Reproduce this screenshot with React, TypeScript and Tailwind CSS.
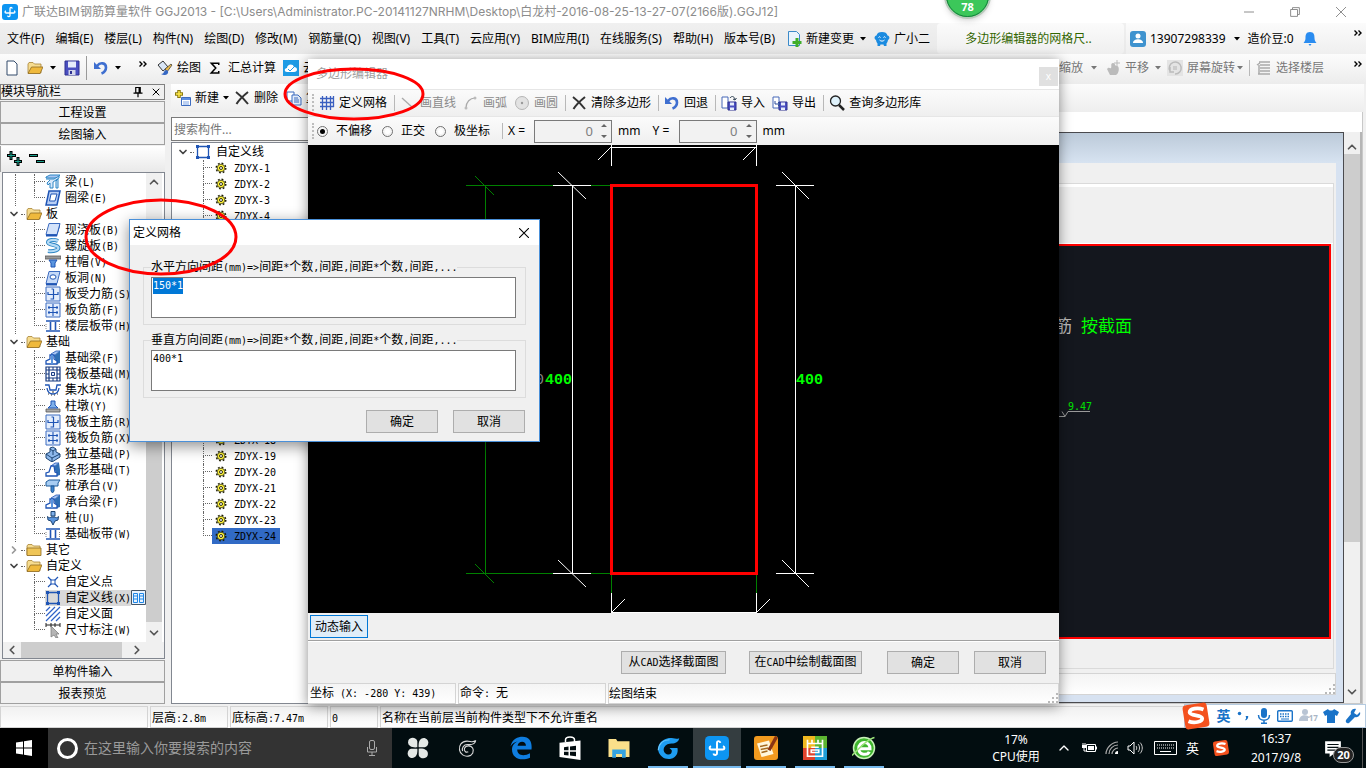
import { useEffect, useRef } from "react";
import type { ReactNode } from "react";
import clsx from "clsx";
import { ChevronDown, ChevronLeft, ChevronRight, ChevronUp, X } from "lucide-react";

// ---------- data ----------

const MENUS = [
    "文件(F)", "编辑(E)", "楼层(L)", "构件(N)", "绘图(D)", "修改(M)", "钢筋量(Q)", "视图(V)",
    "工具(T)", "云应用(Y)", "BIM应用(I)", "在线服务(S)", "帮助(H)", "版本号(B)",
];

interface TreeItem {
    label: string;
    icon: string;
    folder?: "open" | "closed";
    last?: boolean;
    trunk?: boolean;
    selected?: boolean;
}

const NAV_TREE: TreeItem[] = [
    { label: "梁(L)", icon: "beam", trunk: true },
    { label: "圈梁(E)", icon: "ring", trunk: true, last: true },
    { label: "板", icon: "", folder: "open" },
    { label: "现浇板(B)", icon: "slab", trunk: true },
    { label: "螺旋板(B)", icon: "spiral", trunk: true },
    { label: "柱帽(V)", icon: "cap", trunk: true },
    { label: "板洞(N)", icon: "hole", trunk: true },
    { label: "板受力筋(S)", icon: "rebar", trunk: true },
    { label: "板负筋(F)", icon: "rebar2", trunk: true },
    { label: "楼层板带(H)", icon: "band", trunk: true, last: true },
    { label: "基础", icon: "", folder: "open" },
    { label: "基础梁(F)", icon: "footing", trunk: true },
    { label: "筏板基础(M)", icon: "raft", trunk: true },
    { label: "集水坑(K)", icon: "pit", trunk: true },
    { label: "柱墩(Y)", icon: "pier", trunk: true },
    { label: "筏板主筋(R)", icon: "rebar", trunk: true },
    { label: "筏板负筋(X)", icon: "rebar2", trunk: true },
    { label: "独立基础(P)", icon: "isolated", trunk: true },
    { label: "条形基础(T)", icon: "strip", trunk: true },
    { label: "桩承台(V)", icon: "pilecap", trunk: true },
    { label: "承台梁(F)", icon: "footing", trunk: true },
    { label: "桩(U)", icon: "pile", trunk: true },
    { label: "基础板带(W)", icon: "band", trunk: true, last: true },
    { label: "其它", icon: "", folder: "closed" },
    { label: "自定义", icon: "", folder: "open" },
    { label: "自定义点", icon: "point" },
    { label: "自定义线(X)", icon: "poly", selected: true },
    { label: "自定义面", icon: "hatch" },
    { label: "尺寸标注(W)", icon: "dim", last: true },
];

const COMPONENTS = Array.from({ length: 24 }, (_, i) => `ZDYX-${i + 1}`);

// ---------- shared bits ----------

// Latin runs are set in a half-width mono face, Chinese stays full width
function Sim({ children }: { children: string }) {
    return (
        <>
            {children.split(/([\x20-\x7e]+)/).map((part, i) =>
                i % 2 ? (
                    <span key={i} className="font-['DejaVu_Sans_Mono',monospace] text-[10px] whitespace-pre">{part}</span>
                ) : (
                    part
                )
            )}
        </>
    );
}

function Svg({ children, size = "size-4" }: { children: ReactNode; size?: string }) {
    return (
        <svg viewBox="0 0 16 16" className={clsx("shrink-0", size)} fill="none">
            {children}
        </svg>
    );
}

function Arrow({ className = "fill-black" }: { className?: string }) {
    return (
        <svg viewBox="0 0 6 4" className={clsx("h-1 w-1.5 shrink-0", className)}>
            <path d="M0 0h6L3 3.5z" />
        </svg>
    );
}

function More() {
    return (
        <svg viewBox="0 0 8 6" className="h-1.5 w-2 shrink-0" stroke="#000" strokeWidth="1.4" fill="none">
            <path d="M.5.5 3 3 .5 5.5M4.5.5 7 3 4.5 5.5" />
        </svg>
    );
}

function Sep() {
    return <span className="-mr-0.5 h-4 w-px shrink-0 bg-[#b8b8b8]" />;
}

function Grip() {
    return (
        <svg viewBox="0 0 10 10" className="size-2.5 shrink-0" fill="#b9b9b9">
            <path d="M8 0h2v2H8zM4 4h2v2H4zM8 4h2v2H8zM0 8h2v2H0zM4 8h2v2H4zM8 8h2v2H8z" />
        </svg>
    );
}

function DragDots() {
    return <span className="h-4 w-0 shrink-0 border-l-2 border-dotted border-[#bdbdbd]" />;
}

function UndoIcon() {
    return (
        <Svg>
            <path d="M4 6C7 2 13 2.5 13 7.5c0 3-2 5-4.5 6" stroke="#3f6fd0" strokeWidth="2.6" />
            <path d="M1 2v7h7z" fill="#3f6fd0" />
        </Svg>
    );
}

function CrossIcon() {
    return (
        <Svg>
            <path d="M2 2c4 3 8 7 12 12M14 2C9 6 5 10 2.5 14" stroke="#333" strokeWidth="2" />
        </Svg>
    );
}

function FloppyIcon() {
    return (
        <Svg>
            <path d="M1 1h14v14H1z" fill="#4a4fc0" stroke="#2e3190" />
            <path d="M4 1.5h8v6H4z" fill="#e6ecfb" />
            <path d="M4.5 10h7v5h-7z" fill="#d3d6ea" />
            <path d="M6 11h2v3H6z" fill="#2e3190" />
        </Svg>
    );
}

function FolderIcon({ open }: { open?: boolean }) {
    return (
        <Svg>
            <path d="M1 13V4l1-1.5h4L7.5 4H14v9z" fill="#f6dc90" stroke="#a88436" strokeWidth=".8" />
            {open ? (
                <path d="M1 13.5 4.5 7H16l-3 6.5z" fill="#efb93c" stroke="#8f6b21" strokeWidth=".8" />
            ) : (
                <path d="M1 6h14v7.5H1z" fill="#efc557" stroke="#8f6b21" strokeWidth=".8" />
            )}
        </Svg>
    );
}

function TransferIcon({ out }: { out?: boolean }) {
    return (
        <Svg>
            <path d="M1 2h6v11H1z" fill="#fff" stroke="#4668b8" />
            <path d="M7 7h8v8H7z" fill="#4a4fc0" stroke="#2e3190" />
            <path d="M9 7.5h4v3H9zM9 12.5h4V15H9z" fill="#e6ecfb" />
            {out ? <path d="M3 6v3h5M6 7l2 2-2 2" stroke="#2d4d9a" /> : <path d="M9 3c2-3 5-1 5 2M12 4l2 1 1.5-2" stroke="#345" />}
        </Svg>
    );
}

function HookMark() {
    return (
        <>
            <rect width="16" height="16" rx="3" fill="#0d95f2" />
            <path d="M10.2 4.6C10 3 8 3 8 4.6v6.8c0 1.6-2 1.6-2.4.2M4 6.8c-1.400.6-1.200 2.200.2 2.200h7.600c1.400 0 1.600-1.600.2-2.200" stroke="#fff" strokeWidth="1.3" />
        </>
    );
}

function SogouIcon({ size }: { size: string }) {
    return (
        <Svg size={size}>
            <rect x="1.5" y="1.5" width="13" height="13" rx="2" fill="#f4511e" transform="rotate(-9 8 8)" />
            <path d="M12 4.5C9 3.3 4.5 4 4.6 6.1c.1 2 6.6 1.2 6.7 3.2.1 1.9-4.3 2.7-7.3 1.5" stroke="#fff" strokeWidth="2" />
        </Svg>
    );
}

// ---------- tree icons ----------

const BLUE = "#1f55b5";
const PALE = "#a9c6f2";

const TREE_ICONS: Record<string, ReactNode> = {
    beam: (
        <>
            <path d="M1 3 5 1h10l-3 3H1z" fill={PALE} stroke="#2d86c5" />
            <path d="M1 5h8l5-3v2L8 8v6H5V9L3 11 2 9l3-3" fill="#d8e9fb" stroke="#2d86c5" />
            <path d="M11 7v7h2V5z" fill="#d8e9fb" stroke="#2d86c5" />
        </>
    ),
    ring: (
        <>
            <path d="M4 1h11l-3 14H1z" fill="#b9cff5" stroke={BLUE} strokeWidth="1.5" />
            <path d="M6 4h6l-2 7H4.5z" fill="#fff" stroke={BLUE} />
        </>
    ),
    slab: (
        <>
            <path d="M4 1.5h11l-3 11H1z" fill="#d4e3fa" stroke="#3d6cc0" />
            <path d="M1 12.5h11l3-11V4l-3 10.5H1z" fill={BLUE} />
        </>
    ),
    spiral: (
        <>
            <path d="M13 3C9 1 3 2 3 4.500s8 2 10 4.500-4 5-10 4" stroke="#2d86c5" strokeWidth="4" />
            <path d="M13 3C9 1 3 2 3 4.500s8 2 10 4.500-4 5-10 4" stroke="#b5dbf6" strokeWidth="2.2" />
        </>
    ),
    cap: (
        <>
            <path d="M0 2h16v3H0z" fill="#999" stroke="#555" strokeWidth=".8" />
            <path d="M4 6h8l-2 3v4H6V9z" fill="#5a95de" stroke={BLUE} />
        </>
    ),
    hole: (
        <>
            <path d="M4 1.5h11l-3 12H1z" fill="#c6daf8" stroke="#3d6cc0" />
            <ellipse cx="8" cy="7" rx="3" ry="2.2" fill="#fff" stroke={BLUE} />
            <path d="M1 14.5h11" stroke={BLUE} strokeWidth="2" />
        </>
    ),
    rebar: (
        <>
            <path d="M1 1h14v14H1z" fill="#e3edfc" stroke="#3d6cc0" />
            <path d="M3 6v2.5h10V6M8.5 3v10H5.5M8.5 3h-2" stroke={BLUE} strokeWidth="1.2" />
        </>
    ),
    rebar2: (
        <>
            <path d="M1 1h14v14H1z" fill="#e3edfc" stroke="#3d6cc0" />
            <path d="M8 2v12M3 5.5h10M3 10.5h10M4 4v3M12 4v3M4 9v3M12 9v3" stroke={BLUE} strokeWidth="1.1" />
        </>
    ),
    band: (
        <>
            <path d="M1 3h14M1 13h14" stroke={BLUE} strokeWidth="1.6" />
            <path d="M5.5 4v8M10.5 4v8" stroke={BLUE} strokeWidth="1.6" />
            <path d="M1 6v5M14.5 6v5" stroke="#888" strokeDasharray="1 1" />
        </>
    ),
    footing: (
        <>
            <path d="M6 4 11 1h4L9 6z" fill={PALE} stroke={BLUE} strokeWidth=".8" />
            <path d="m9 6 6-5v12l-3 1z" fill="#2f6fb4" />
            <path d="M1 14v-3l4-2V5h4v4l3 2v3z" fill="#fff" stroke={BLUE} strokeWidth="1.3" />
            <path d="M6 5h2v9H6z" fill="#5a95de" />
        </>
    ),
    raft: (
        <>
            <path d="M1 1h14v14H1z" fill="#fff" stroke="#173a80" strokeWidth="1.2" />
            <path d="M4 1v14M12 1v14M1 4h14M1 12h14" stroke="#173a80" strokeWidth="1.2" />
            <path d="M6.5 6.5h3v3h-3z" fill="#dfeafc" stroke="#173a80" />
            <path d="M8 1v3M8 12v3M1 8h3M12 8h3" stroke="#173a80" />
        </>
    ),
    pit: (
        <>
            <path d="M0 3h4l1 5h6l1-5h4M2 6c1 8 11 8 12 0" stroke={BLUE} strokeWidth="1.3" />
            <path d="M3 12h1M6 13h1M9 13h1M12 12h1M7 10h2" stroke="#333" />
        </>
    ),
    pier: (
        <>
            <path d="M1 11h14v3H1z" fill="#aaa" stroke="#555" strokeWidth=".8" />
            <path d="m3 10 3-3V3h4v4l3 3z" fill="#7fb0ea" stroke={BLUE} />
        </>
    ),
    isolated: (
        <>
            <path d="m1 8 4-2V2l3-1 3 2v3l4 2v3l-8 5-6-4z" fill="#8db8ec" stroke="#1d4472" />
            <path d="m1 8 6 4 8-4M7 12v4M5 3l3 2 3-2M8 5v4" stroke="#1d4472" />
        </>
    ),
    strip: (
        <>
            <path d="M6 4 10 1h4L9 5z" fill={PALE} stroke={BLUE} strokeWidth=".8" />
            <path d="m9 5 5-4 1 7v5l-3 1z" fill="#2f6fb4" />
            <path d="M1 14v-3l3-1 2-6h3l1 6 2 1v3z" fill="#fff" stroke={BLUE} strokeWidth="1.3" />
        </>
    ),
    pilecap: (
        <>
            <path d="m1 4 3-2h11l-2 3v3H1z" fill="#a7cdf3" stroke="#1d5a9a" />
            <path d="M6 8h3v5l-1.5 2L6 13z" fill="#3d84cf" stroke="#1d5a9a" />
        </>
    ),
    pile: (
        <>
            <path d="M6 1.5h4V6H6z" fill="#7fb0ea" stroke="#1d4472" />
            <path d="M2.5 6.500C4 8 5 8 6 7h4c1 1 2 1 3.500-.5l-.5 3.500-3 1-2 4-2-4-3-1z" fill="#5a95de" stroke="#1d4472" />
        </>
    ),
    point: (
        <>
            <path d="m3 3 10 10M13 3 3 13" stroke={BLUE} strokeWidth="1.2" />
            <path d="M6 6h4v4H6z" fill="#fff" stroke={BLUE} />
        </>
    ),
    poly: (
        <>
            <path d="M2.5 2.5h11v11h-11z" stroke={BLUE} strokeWidth="1.3" />
            <path d="M1 1h3v3H1zM12 1h3v3h-3zM1 12h3v3H1zM12 12h3v3h-3z" fill={BLUE} />
        </>
    ),
    hatch: <path d="m1 5 4-4M1 10l9-9M1 15 15 1M6 15l9-9M11 15l4-4" stroke="#2f62c8" strokeWidth="1.2" />,
    dim: (
        <>
            <path d="M1 3h14M1 1v4M15 1v4M6 1v4M10 1v4" stroke="#222" />
            <path d="m6 4 8 8h-3l2 4h-2l-2-3-3 2z" fill="#b5b5b5" stroke="#777" strokeWidth=".7" />
        </>
    ),
    gear: (
        <>
            <circle cx="8" cy="8" r="4.8" stroke="#1c1c00" strokeWidth="1.4" strokeDasharray="1.8 1.97" />
            <circle cx="8" cy="8" r="3.8" fill="#fff338" stroke="#1c1c00" strokeWidth=".7" />
            <circle cx="8" cy="8" r="1.5" fill="#fff" stroke="#1c1c00" strokeWidth=".9" />
        </>
    ),
};

// ---------- left dock ----------

function TreeRow({ item }: { item: TreeItem }) {
    if (item.folder) {
        const Chevron = item.folder === "open" ? ChevronDown : ChevronRight;
        return (
            <li className="flex h-4 items-center">
                <Chevron className={clsx("ml-[5px] size-3 shrink-0", item.folder === "open" ? "text-[#444]" : "text-[#999]")} strokeWidth={3.5} />
                <span className="mx-px w-1 border-t border-dotted border-[#666]" />
                <FolderIcon open={item.folder === "open"} />
                <span className="ml-1 leading-4"><Sim>{item.label}</Sim></span>
            </li>
        );
    }
    return (
        <li className="flex h-4 items-center">
            <span className={clsx("ml-3 h-4 w-[19px] shrink-0", item.trunk && "border-l border-dotted border-[#666]")} />
            <span className="flex h-4 w-[11px] shrink-0 flex-col">
                <span className="h-2 border-b border-l border-dotted border-[#666]" />
                <span className={clsx("h-2", !item.last && "border-l border-dotted border-[#666]")} />
            </span>
            <span className={clsx("flex h-4 items-center gap-1 whitespace-nowrap leading-4", item.selected && "bg-[#d9d9d9]")}>
                <Svg>{TREE_ICONS[item.icon]}</Svg>
                <span><Sim>{item.label}</Sim></span>
            </span>
            {item.selected && (
                <Svg>
                    <path d="M.5.5h14v14H.5z" fill="#e8f3ff" stroke="#456" />
                    <path d="M2.5 3.5h4v9h-4zM8.5 3.5h4v9h-4zM3 6h3M3 9h3M9 6h3M9 9h3" stroke="#1e86e6" />
                </Svg>
            )}
        </li>
    );
}

function DockButton({ label }: { label: string }) {
    return (
        <button className="h-[22px] w-full shrink-0 border border-[#a0a0a0] bg-[#f0f0f0] text-center leading-[22px]">
            {label}
        </button>
    );
}

function NavDock() {
    return (
        <aside className="flex w-[165px] shrink-0 flex-col">
            <header className="flex h-4 items-center justify-between border border-[#808080] pr-0.5 leading-4">
                <span>模块导航栏</span>
                <span className="flex items-center gap-1.5">
                    <Svg size="size-3">
                        <path d="M5 2h6v7H5zM9.5 2v7M2 9.5h12M8 10v5" stroke="#000" strokeWidth="1.6" />
                    </Svg>
                    <X className="size-3" />
                </span>
            </header>
            <div className="mt-px flex flex-col">
                <DockButton label="工程设置" />
                <DockButton label="绘图输入" />
            </div>
            <div className="mt-px flex h-[26px] shrink-0 items-center gap-1.5 border-l border-[#a0a0a0] bg-linear-to-b from-white to-[#e9e9e9] pl-1.5">
                <Svg>
                    <path d="M4 0v9M0 4.5h9M11 6v9M7 10.5h8" stroke="#000" strokeWidth="3" />
                    <path d="M4 1v7M1 4.5h7M11 7v7M8 10.5h6" stroke="#1aa08c" />
                </Svg>
                <Svg>
                    <path d="M0 4.5h9M7 10.5h9" stroke="#000" strokeWidth="3" />
                    <path d="M1 4.5h7M8 10.5h7" stroke="#1aa08c" />
                </Svg>
            </div>
            <div className="ml-0.5 flex min-h-0 flex-1 flex-col border border-[#828790] bg-white">
                <div className="flex min-h-0 flex-1">
                    <ul className="min-w-0 flex-1 overflow-hidden pt-px">
                        {NAV_TREE.map((item) => <TreeRow key={item.label} item={item} />)}
                    </ul>
                    <div className="mr-0.5 flex w-4 shrink-0 flex-col items-center justify-between bg-[#f0f0f0] py-0.5">
                        <ChevronUp className="size-3.5 text-[#555]" strokeWidth={3} />
                        <span className="mt-12 mb-1 w-full flex-1 bg-[#cdcdcd]" />
                        <ChevronDown className="size-3.5 text-[#555]" strokeWidth={3} />
                    </div>
                </div>
                <div className="flex h-4 shrink-0 items-center bg-[#f0f0f0] pr-5">
                    <ChevronLeft className="mx-0.5 size-3.5 text-[#555]" strokeWidth={3} />
                    <span className="mr-2 h-full flex-1 bg-[#cdcdcd]" />
                    <ChevronRight className="size-3.5 text-[#555]" strokeWidth={3} />
                </div>
            </div>
            <div className="mt-px flex flex-col">
                <DockButton label="单构件输入" />
                <DockButton label="报表预览" />
            </div>
        </aside>
    );
}

function ComponentPanel() {
    return (
        <section className="ml-1.5 flex w-[184px] shrink-0 flex-col overflow-hidden">
            <div className="flex h-7 shrink-0 items-center gap-1 bg-linear-to-b from-white to-[#eeeeee] pl-1">
                <button className="flex items-center gap-1">
                    <Svg>
                        <path d="M4 0v8M0 4h8" stroke="#8a7a10" strokeWidth="3.5" />
                        <path d="M4 1v6M1 4h6" stroke="#ffe94a" strokeWidth="1.5" />
                        <path d="M6.5 7.5h9v8h-9z" fill="#fff" stroke="#3d6cc0" />
                        <path d="M7 8h8v2H7z" fill="#5c8de0" />
                        <path d="M8 12h6M8 14h6" stroke="#7da4e6" />
                    </Svg>
                    新建
                    <Arrow />
                </button>
                <button className="ml-px flex items-center gap-1"><CrossIcon />删除</button>
                <button className="ml-1 flex items-center gap-1 whitespace-nowrap">
                    <Svg>
                        <path d="M1 2h7v9H1z" fill="#fff" stroke="#3d6cc0" />
                        <path d="M6 5h6l3 3v7H6z" fill="#e3edfc" stroke="#3d6cc0" />
                        <path d="M8 8h4M8 10h5M8 12h5" stroke="#3d6cc0" />
                    </Svg>
                    复制
                </button>
            </div>
            <input
                aria-label="搜索构件"
                placeholder="搜索构件..."
                className="mt-[5px] h-6 w-full shrink-0 border border-[#7a7a7a] bg-white pl-0.5 outline-none placeholder:text-[#777]"
            />
            <div className="mt-px min-h-0 flex-1 overflow-hidden border border-[#828790] bg-white">
                <div className="flex h-[17px] items-center pt-px pl-[5px]">
                    <ChevronDown className="size-3 text-[#444]" strokeWidth={3.5} />
                    <span className="mx-px w-1 border-t border-dotted border-[#666]" />
                    <Svg>{TREE_ICONS.poly}</Svg>
                    <span className="ml-[5px]">自定义线</span>
                </div>
                <ul>
                    {COMPONENTS.map((name, i) => (
                        <li key={name} className="flex h-4 items-center">
                            <span className="ml-[31px] flex h-4 w-[9px] shrink-0 flex-col">
                                <span className="h-2 border-b border-l border-dotted border-[#666]" />
                                <span className={clsx("h-2", i < 23 && "border-l border-dotted border-[#666]")} />
                            </span>
                            <span className={clsx("flex h-4 items-center gap-[5px] pr-1 pl-px leading-4", i === 23 && "bg-[#316ac5]")}>
                                <Svg>{TREE_ICONS.gear}</Svg>
                                <span><Sim>{name}</Sim></span>
                            </span>
                        </li>
                    ))}
                </ul>
            </div>
        </section>
    );
}

// ---------- drawing area behind the editor ----------

function DrawingArea() {
    return (
        <main className="ml-1 flex min-w-0 flex-1 flex-col">
            <div className="mr-0.5 h-7 shrink-0 bg-linear-to-b from-[#fcfcfc] to-[#eeeeee]" />
            <div className="mr-[3px] h-5 shrink-0 border-r border-[#c8c8c8] bg-white" />
            <div className="mr-[3px] flex min-h-0 flex-1 border border-t-0 border-[#c8c8c8] bg-white">
                <div className="flex min-w-0 flex-1 flex-col border-t border-r border-b border-[#4a4a4e] bg-[#d7e2f1] pr-[7px] pb-[7px]">
                    <div className="-mr-[7px] h-[30px] shrink-0 bg-linear-to-b from-[#bccad9] to-[#d7e3f1]" />
                    <div className="flex min-h-0 flex-1 flex-col bg-[#f0f0f0] pt-5">
                        <div className="mr-0.5 flex min-h-0 flex-1 flex-col border-t border-r border-b border-[#dadada] bg-[#f0f0f0]">
                            <div className="h-[60px] shrink-0 border-t-3 border-b border-white" />
                            <div className="relative mr-0.5 min-h-0 flex-1 overflow-hidden border-2 border-[#ff0000] bg-[#14171e]">
                                <svg viewBox="0 0 270 180" className="absolute top-0 right-0 h-[180px] w-[270px]">
                                    <text x="-4" y="86" fontSize="17" fill="#b9b9b9" fontFamily="Noto Sans CJK SC">筋</text>
                                    <text x="22" y="86" fontSize="17" fill="#00ff00" fontFamily="Noto Sans CJK SC">按截面</text>
                                    <text x="9" y="164" fontSize="10" fill="#00e000" fontFamily="DejaVu Sans Mono">9.47</text>
                                    <path d="M0 170.5h6l3-5h22M3 165.5l3 5" stroke="#9a9a9a" fill="none" />
                                </svg>
                            </div>
                            <div className="h-[29px] shrink-0" />
                        </div>
                        <div className="mt-1 flex h-[22px] shrink-0 items-end justify-end border border-[#d4d4d4] bg-linear-to-b from-[#f4f4f4] to-white"><Grip /></div>
                    </div>
                </div>
                <div className="flex w-[18px] shrink-0 flex-col items-center border-r-2 border-[#b5b5b5] bg-[#f0f0f0] pt-2 pb-1">
                    <ChevronUp className="size-3.5 text-[#555]" strokeWidth={3} />
                    <span className="h-[388px] w-full bg-[#cdcdcd]" />
                    <span className="flex-1" />
                    <ChevronDown className="size-3.5 text-[#555]" strokeWidth={3} />
                </div>
            </div>
        </main>
    );
}

// ---------- top bars ----------

function TitleBar() {
    return (
        <header className="flex h-[23px] shrink-0 items-center bg-white pl-0.5 text-[#8c8c8c]">
            <Svg><HookMark /></Svg>
            <h1 className="ml-1 flex-1 truncate font-['Inter','Noto_Sans_CJK_SC',sans-serif]">
                广联达BIM钢筋算量软件 GGJ2013 - [C:\Users\Administrator.PC-20141127NRHM\Desktop\白龙村-2016-08-25-13-27-07(2166版).GGJ12]
            </h1>
            <div className="flex items-center gap-9 pr-5">
                <button aria-label="最小化"><Svg size="size-2.5"><path d="M0 8h16" stroke="#888" strokeWidth="1.5" /></Svg></button>
                <button aria-label="还原"><Svg size="size-2.5"><path d="M1 4h11v11H1zM4 4V1h11v11h-3" stroke="#888" strokeWidth="1.5" /></Svg></button>
                <button aria-label="关闭"><Svg size="size-2.5"><path d="m0 0 16 16M16 0 0 16" stroke="#888" strokeWidth="1.5" /></Svg></button>
            </div>
        </header>
    );
}

function MenuBar() {
    return (
        <div className="flex h-[31px] shrink-0 items-center whitespace-nowrap bg-linear-to-b from-[#f0f0f0] to-[#e8e8e8]">
            <nav className="flex gap-[11px] pl-[7px]">
                {MENUS.map((m) => <button key={m}>{m}</button>)}
            </nav>
            <button className="ml-[11px] flex items-center gap-1">
                <Svg>
                    <path d="M2.5.5h8l3 3v11h-11z" fill="#e9f4fd" stroke="#3b8ac9" />
                    <path d="M11 7v9M6.5 11.5h9" stroke="#3fae2a" strokeWidth="3" />
                </Svg>
                新建变更
                <Arrow className="ml-0.5 fill-black" />
            </button>
            <button className="ml-2 flex items-center gap-1">
                <Svg>
                    <path d="M8 1c3 0 5 1 5.5 3.5C16 5 16 8 14 9c-.3 1.5-.7 2.5-1.5 3.5V15H10l-.5-1.5h-3L6 15H3.5v-2.5C2.7 11.5 2.3 10.5 2 9 0 8 0 5 2.5 4.5 3 2 5 1 8 1z" fill="#1b8be0" />
                    <path d="M4.5 6.5c.5-1 1.5-1 2 0M9.5 6.5c.5-1 1.5-1 2 0M5.5 9c1.5 1.5 3.5 1.5 5 0" stroke="#fff" />
                </Svg>
                广小二
            </button>
            <div className="ml-auto flex h-full w-[187px] items-center justify-center rounded-sm bg-linear-to-b from-[#fbfbfb] to-[#efefef] pr-1 text-[#336600]">
                多边形编辑器的网格尺..
            </div>
            <div className="ml-0.5 flex h-full w-[240px] items-center bg-linear-to-b from-[#fbfbfb] to-[#efefef] pl-1">
                <Svg>
                    <rect width="16" height="16" rx="3" fill="#3f93cf" />
                    <circle cx="8" cy="5" r="2.5" fill="#fff" />
                    <path d="M3 12c0-5 10-5 10 0z" fill="#fff" />
                </Svg>
                <span className="ml-1">13907298339</span>
                <Arrow className="ml-2 fill-black" />
                <span className="ml-2">造价豆:0</span>
                <Svg size="ml-2 size-4">
                    <path d="M8 1c4 0 4.5 3 4.5 6 0 2 .5 3 2 5H1.5c1.5-2 2-3 2-5 0-3 .5-6 4.5-6zM6.5 13h3L8 15z" fill="#2a8cf0" />
                </Svg>
                <span className="mr-1 mb-3 ml-auto"><More /></span>
            </div>
        </div>
    );
}

function ToolBar() {
    return (
        <div className="flex h-[30px] shrink-0 items-center whitespace-nowrap bg-linear-to-b from-[#fcfcfc] to-[#ececec] pb-[3px] pl-1">
            <div className="flex items-center">
                <Svg><path d="M3 1h7l3 3v11H3z" fill="#fff" stroke="#334a6a" /></Svg>
                <span className="ml-[7px]"><FolderIcon open /></span>
                <Arrow className="ml-[7px] fill-black" />
                <span className="ml-2"><FloppyIcon /></span>
                <span className="mx-1.5 h-6 w-px bg-[#9a9a9a]" />
                <UndoIcon />
                <Arrow className="ml-1.5 fill-black" />
            </div>
            <span className="mb-2 ml-[18px]"><More /></span>
            <button className="ml-2.5 flex items-center gap-1">
                <Svg>
                    <path d="m1 5 5-4 5 6-5 4z" fill="#d9e6f7" stroke="#333" />
                    <path d="m8 9 6-5 1 1-5 7z" fill="#e8b94a" stroke="#333" strokeWidth=".7" />
                    <path d="M10 10c-4 0-2 4-6 4 3 2 8 1 7-3z" fill="#3668c4" />
                </Svg>
                绘图
            </button>
            <button className="ml-2 flex items-center gap-[7px]">
                <Svg size="size-3"><path d="M13 4V1.5H3L9 8l-6 6.5h10V12" stroke="#000" strokeWidth="2" /></Svg>
                汇总计算
            </button>
            <button className="ml-[7px] flex items-center gap-1">
                <Svg>
                    <rect width="16" height="16" fill="#1d9be5" />
                    <path d="M4 12c-3 0-3-4 0-4 0-4 6-5 7-1 4 0 4 5 0 5z" fill="#fff" />
                    <path d="m5 9 2 2 4-4" stroke="#1d9be5" />
                </Svg>
                云检查
            </button>
            <div className="ml-auto flex items-center text-[#777]">
                <span>缩放</span>
                <Arrow className="ml-2 fill-[#777]" />
                <Svg size="ml-2 size-4">
                    <path d="M2 9c2-3 3 0 4-1s-1-5 2-5 1 3 4 3 2 8-1 9H5z" fill="#bbb" />
                    <path d="M12 0v6M9 3h6" stroke="#bbb" />
                </Svg>
                <span className="ml-1">平移</span>
                <Arrow className="ml-1.5 fill-[#777]" />
                <Svg size="ml-1.5 size-4">
                    <path d="M0 0h16v16H0z" fill="#e4e4e4" />
                    <path d="M3 11a6 6 0 1 1 5 3M3 7v5h4" stroke="#bbb" strokeWidth="1.5" />
                    <path d="M6 6h4v4H6z" fill="#ccc" />
                </Svg>
                <span className="ml-1">屏幕旋转</span>
                <Arrow className="ml-0.5 fill-[#777]" />
                <span className="mx-1.5 h-4 w-px bg-[#b8b8b8]" />
                <Svg><path d="M3 2h11M1 5l3-2M4 5h10M4 8h10M4 11h10M2 14h12M3 5v9" stroke="#aaa" strokeWidth="1.5" /></Svg>
                <span className="ml-1">选择楼层</span>
                <span className="mr-1 mb-2 ml-[30px]"><More /></span>
            </div>
        </div>
    );
}

// ---------- polygon editor ----------

function ToolButton({ icon, label, disabled }: { icon: ReactNode; label: string; disabled?: boolean }) {
    return (
        <button disabled={disabled} className="flex shrink-0 items-center gap-1 text-black disabled:text-[#8a8a8a]">
            {icon}
            {label}
        </button>
    );
}

function Coord({ axis }: { axis: string }) {
    return (
        <label className="flex items-center">
            <span className="w-[26px]">{axis} =</span>
            <span className="flex h-[23px] w-[78px] items-center border border-[#7a7a7a] bg-[#f2f2f2] pr-1">
                <input defaultValue="0" className="w-full min-w-0 pr-2 text-right text-[13px] text-[#808080] outline-none" />
                <svg viewBox="0 0 6 16" className="h-4 w-1.5 shrink-0" fill="#666">
                    <path d="M0 4h6L3 1zM0 12h6l-3 3z" />
                </svg>
            </span>
            <span className="ml-1.5">mm</span>
        </label>
    );
}

function PolygonCanvas() {
    return (
        <div className="min-h-0 flex-1 overflow-hidden bg-black">
            <svg viewBox="0 0 751 468" className="h-[468px] w-[751px]" fill="none">
                <g stroke="#008000">
                    <path d="M158 40.5h145M158 428.5h145M177.5 40v388M167 31l19 19M167 419l19 19M303.5 430v20M448.5 430v20" />
                </g>
                <g stroke="#fff">
                    <path d="M303 2.5h146M303.5 0v21M448.5 0v21M290 15 303 2M435 15 448 2" />
                    <path d="M245 40.5h38M245 428.5h38M264.5 40v388M250 27l28 27M250 415l28 27" />
                    <path d="M468 40.5h38M468 428.5h38M487.5 40v388M474 27l27 27M474 415l27 27" />
                    <path d="M303 467.5h146M303.5 448v20M448.5 448v20M304 467l13-13M449 467l13-13" />
                </g>
                <rect x="303.5" y="40.5" width="145" height="388" stroke="#ff0000" strokeWidth="3" />
                <g fontFamily="Liberation Mono" fontSize="15" fontWeight="700" fill="#00ff00">
                    <text x="237" y="239">400</text>
                    <text x="488" y="239">400</text>
                </g>
                <text x="209" y="239" fontFamily="Liberation Mono" fontSize="15" fill="#a0a0a0">400</text>
            </svg>
        </div>
    );
}

function PushButton({ label, className }: { label: string; className: string }) {
    return (
        <button className={clsx("h-[23px] shrink-0 border border-[#adadad] bg-[#e1e1e1] text-center leading-5", className)}>
            <Sim>{label}</Sim>
        </button>
    );
}

function PolygonEditor() {
    return (
        <section className="absolute top-[59px] left-[308px] flex h-[645px] w-[751px] flex-col bg-[#f0f0f0] whitespace-nowrap shadow-[0_2px_12px_rgba(0,0,0,0.45)]">
            <header className="flex h-[30px] shrink-0 items-center justify-between bg-white pl-2 text-[#a0a0a0]">
                <h2>多边形编辑器</h2>
                <button className="mt-1 mr-px size-[19px] bg-[#e0e0e0] text-[10px] leading-4 text-white">x</button>
            </header>
            <div className="flex h-[27px] shrink-0 items-center gap-[7px] border-t border-[#e6e6e6] bg-linear-to-b from-[#fbfbfb] to-[#efefef] pl-1">
                <span className="-mr-0.5"><DragDots /></span>
                <ToolButton label="定义网格" icon={<Svg><path d="M3.5 1v14M7.5 1v14M11.5 1v14M1 3.5h14M1 7.5h14M1 11.5h14M14.5 1v11" stroke="#3a5fc0" strokeWidth="1.3" /></Svg>} />
                <Sep />
                <ToolButton disabled label="画直线" icon={<Svg><path d="m2 3 11 10" stroke="#aaa" strokeWidth="1.3" /></Svg>} />
                <ToolButton disabled label="画弧" icon={<Svg><path d="M3 13C3 7 7 3 12 3" stroke="#aaa" strokeWidth="1.2" /><circle cx="3" cy="13" r="1.5" fill="#bbb" /><circle cx="12" cy="3" r="1.5" fill="#bbb" /></Svg>} />
                <ToolButton disabled label="画圆" icon={<Svg><circle cx="8" cy="8" r="6.5" fill="#e2e2e2" stroke="#b5b5b5" /><circle cx="8" cy="8" r="1.2" fill="#999" /></Svg>} />
                <Sep />
                <ToolButton label="清除多边形" icon={<CrossIcon />} />
                <Sep />
                <ToolButton label="回退" icon={<UndoIcon />} />
                <Sep />
                <ToolButton label="导入" icon={<TransferIcon />} />
                <ToolButton label="导出" icon={<TransferIcon out />} />
                <Sep />
                <ToolButton label="查询多边形库" icon={<Svg><circle cx="6.5" cy="6" r="5" fill="#dff2fb" stroke="#222" strokeWidth="1.3" /><path d="m10 10 5 5" stroke="#222" strokeWidth="2.5" /></Svg>} />
            </div>
            <div className="flex h-[29px] shrink-0 items-center border-t border-[#e6e6e6] bg-linear-to-b from-[#fbfbfb] to-[#efefef] pl-1">
                <DragDots />
                <div className="ml-[3px] flex items-center gap-2.5">
                    {["不偏移", "正交", "极坐标"].map((name, i) => (
                        <label key={name} className="flex items-center gap-2">
                            <input
                                type="radio"
                                name="offset"
                                defaultChecked={i === 0}
                                className="size-[11px] appearance-none rounded-full border border-[#707070] bg-white bg-clip-content p-0.5 checked:bg-black"
                            />
                            {name}
                        </label>
                    ))}
                </div>
                <span className="mr-[5px] ml-3 h-4 w-px bg-[#b8b8b8]" />
                <div className="flex gap-3">
                    <Coord axis="X" />
                    <Coord axis="Y" />
                </div>
            </div>
            <PolygonCanvas />
            <div className="h-7 shrink-0 border-b border-[#a0a0a0] pt-0.5 pl-0.5">
                <button className="h-[23px] w-[58px] border border-[#0078d7] bg-[#e0eef9] text-center leading-5">动态输入</button>
            </div>
            <div className="flex h-[42px] shrink-0 items-center justify-end border-t border-white pr-[13px]">
                <PushButton label="从CAD选择截面图" className="w-[105px]" />
                <PushButton label="在CAD中绘制截面图" className="ml-[23px] w-[113px]" />
                <PushButton label="确定" className="ml-[25px] w-[72px]" />
                <PushButton label="取消" className="ml-[15px] w-[72px]" />
            </div>
            <footer className="flex h-[21px] shrink-0 gap-0.5 bg-linear-to-b from-[#f4f4f4] to-white leading-[18px]">
                <span className="w-[148px] border border-l-0 border-[#d4d4d4] pl-0.5"><Sim>坐标 (X: -280 Y: 439)</Sim></span>
                <span className="w-[148px] border border-[#d4d4d4] pl-px"><Sim>命令: 无</Sim></span>
                <span className="flex flex-1 items-end justify-between border border-[#d4d4d4]">绘图结束<Grip /></span>
            </footer>
        </section>
    );
}

// ---------- grid dialog ----------

function GridDialog() {
    const first = useRef<HTMLTextAreaElement>(null);

    useEffect(() => {
        first.current?.focus();
        first.current?.select();
    }, []);

    const area = "block h-[41px] w-full resize-none border border-[#7a7a7a] bg-white px-px font-['DejaVu_Sans_Mono',monospace] text-[10px] leading-4 outline-none selection:bg-[#0078d7] selection:text-white";

    return (
        <section role="dialog" aria-label="定义网格" className="absolute top-[219px] left-[129px] w-[411px] border border-[#4a90d9] bg-[#f0f0f0] whitespace-nowrap shadow-[0_4px_14px_rgba(0,0,0,0.45)]">
            <header className="flex h-[25px] items-center justify-between bg-white pr-2.5 pl-[3px]">
                <h2>定义网格</h2>
                <button aria-label="关闭"><Svg size="size-2.5"><path d="m0 0 16 16M16 0 0 16" stroke="#000" strokeWidth="1.7" /></Svg></button>
            </header>
            <div className="flex flex-col gap-[7px] px-[13px] pt-3.5">
                <fieldset className="min-w-0 border border-[#dcdcdc] pt-0.5 pr-[9px] pb-1.5 pl-[7px]">
                    <legend className="h-4 leading-4"><label htmlFor="grid-h"><Sim>水平方向间距(mm)=&gt;间距*个数,间距,间距*个数,间距,...</Sim></label></legend>
                    <textarea id="grid-h" ref={first} className={area} defaultValue="150*1" />
                </fieldset>
                <fieldset className="min-w-0 border border-[#dcdcdc] pt-0.5 pr-[9px] pb-1.5 pl-[7px]">
                    <legend className="h-4 leading-4"><label htmlFor="grid-v"><Sim>垂直方向间距(mm)=&gt;间距*个数,间距,间距*个数,间距,...</Sim></label></legend>
                    <textarea id="grid-v" className={area} defaultValue="400*1" />
                </fieldset>
            </div>
            <div className="flex justify-end gap-[15px] pt-3 pr-3.5 pb-2">
                <PushButton label="确定" className="w-[72px]" />
                <PushButton label="取消" className="w-[72px]" />
            </div>
        </section>
    );
}

// ---------- bottom bars ----------

function StatusBar() {
    return (
        <footer className="relative flex h-[22px] shrink-0 gap-0.5 bg-linear-to-b from-[#f0f0f0] to-white leading-[22px] whitespace-nowrap">
            <span className="w-[148px] border border-[#d4d4d4]" />
            <span className="w-[78px] border border-[#d4d4d4] pl-px"><Sim>层高:2.8m</Sim></span>
            <span className="w-[98px] border border-[#d4d4d4] pl-px"><Sim>底标高:7.47m</Sim></span>
            <span className="w-12 border border-[#d4d4d4] pl-px"><Sim>0</Sim></span>
            <span className="flex-1 border border-[#d4d4d4] pl-px">名称在当前层当前构件类型下不允许重名</span>
            <div className="absolute -top-0.5 right-0 flex h-6 w-[182px] items-center justify-between border border-[#b5cbe0] bg-white pr-1 font-bold text-[#1a73c8]">
                <SogouIcon size="-my-2 -ml-1 size-[30px]" />
                <span className="text-[14px]">英</span>
                <Svg size="size-3.5"><circle cx="4" cy="5" r="2" fill="#1a73c8" /><path d="M11 8h3c0 3-1 4-3 5l-.5-1c1-.5 1-1 1-2z" fill="#1a73c8" /></Svg>
                <Svg><rect x="5" width="6" height="10" rx="3" fill="#1a73c8" /><path d="M2.5 7c0 7 11 7 11 0M8 12v3M5 15.2h6" stroke="#1a73c8" strokeWidth="1.5" /></Svg>
                <Svg><rect x=".7" y="2.7" width="14.6" height="10.6" rx="1" stroke="#1a73c8" strokeWidth="1.4" /><path d="M3 6h10M3 8.5h10" stroke="#1a73c8" strokeWidth="1.5" strokeDasharray="1.5 1" /><path d="M4 11h8" stroke="#1a73c8" /></Svg>
                <span className="flex items-end text-[8px] leading-3 text-[#aab6c6]">
                    <Svg size="-mr-1.5 size-4"><circle cx="6" cy="4" r="3" fill="#b8c4d4" /><path d="M0 13c0-7 9-7 11-3H9v3z" fill="#b8c4d4" /></Svg>
                    17
                </span>
                <Svg><path d="M5 1c1 2 5 2 6 0l5 3-2 4-2-1v8H4V7L2 8 0 4z" fill="#1a73c8" /></Svg>
                <Svg><path d="M15 4l-3 3-3-2 2-4C7 0 5 4 6 6L1 12c-1 2 1 4 3 3l6-6c3 1 6-2 5-5z" fill="#1a73c8" /></Svg>
            </div>
        </footer>
    );
}

const SWIRL = "M15 2C12.5 4 11 2.5 8 2.5 3.5 2.5 1.5 6 2 9.5c.5 3.5 4 5.5 7 5 3.5-.5 5-4 3.5-6.5-1.500-2.300-5.500-2.300-6.500.3-.7 2 1.200 3.700 3 2.700M15 2c-.5 3-3 3.500-6.500 3.200C5.500 5 3.500 8 4.500 10.500";

const APPS: { name: string; icon: ReactNode; running?: boolean; active?: boolean }[] = [
    {
        name: "edge",
        icon: <path d="M1 7C2 2 6 .5 9 .5c5 0 6.5 4 6 8.5H5.5c0 4.500 5 4.500 8.500 2.500v3C8 17 2 15 2 9c0-3 2-4.500 4-5.500C4 4 2 5 1 7zm4.700-.5h5.600c0-3.500-5-3.500-5.600 0z" fill="#0f7de0" />,
    },
    {
        name: "store",
        icon: (
            <>
                <path d="M1 4.5 15 3v13L1 14z" fill="#fff" />
                <path d="M5 4V2.5C5 0 11 0 11 2.5V4" stroke="#fff" />
                <path d="M4 7.5 7 7v2.5H4zM8 7l4-.5v3H8zM4 10.5h3V13l-3-.4zM8 10.5h4v3L8 13z" fill="#020d10" />
            </>
        ),
    },
    {
        name: "explorer",
        icon: (
            <>
                <path d="M1 2h5l1 1.5h8V14H1z" fill="#fbe08a" />
                <path d="M3.5 14.5V9h9v5.5h-2.5V12H6v2.5z" fill="#35a3e0" />
            </>
        ),
    },
    {
        name: "browser",
        running: true,
        icon: (
            <>
                <path d="M15.5 1.5c-2.500 1-4.500-.5-7.500 0-4.500.8-7 4.500-6.500 8 .6 4 4.500 6.500 8.500 5.700 3.500-.8 5-4 4.300-7.200H9l1.500 1.500c.3 2-1 3-2.500 2.800C5.500 12 4.500 9.500 5.500 7.500 6.500 5.500 8.500 5 10.500 5c2.500 0 4.500-1 5-3.500z" fill="#1e9cf0" />
                <path d="M1.5 9.5C2 5 5 2.5 9 2.5" stroke="#6cc6fb" strokeWidth=".8" />
            </>
        ),
    },
    { name: "bim", running: true, active: true, icon: <HookMark /> },
    {
        name: "notes",
        running: true,
        icon: (
            <>
                <rect width="16" height="16" rx="2" fill="#f29a1f" />
                <path d="m2 5 8-2 3 9-8 2z" fill="#fff7dc" />
                <path d="m4 7 5-1M4.5 9l5-1M5 11l4-1" stroke="#a66b20" />
                <path d="m9 9 5-9 2 1-5 9z" fill="#8a3413" />
            </>
        ),
    },
    {
        name: "plan",
        running: true,
        icon: (
            <>
                <path d="M0 0h8v8H0z" fill="#f0b81f" />
                <path d="M8 0h8v8H8z" fill="#5cb531" />
                <path d="M0 8h8v8H0z" fill="#e2432d" />
                <path d="M8 8h8v8H8z" fill="#1f9ed8" />
                <path d="M3 2.5v11h10v-11M3 5h10M5.5 7.5h5M5.5 11h5V9.300h-5zM6 2.500V5M10 2.500V5" stroke="#fff" strokeWidth="1.1" />
            </>
        ),
    },
    {
        name: "ie",
        running: true,
        icon: (
            <>
                <circle cx="8" cy="8" r="7" fill="#3fb52e" stroke="#c8f0b8" />
                <path d="M4 8.5h8C12 3 4.5 3 4.5 8.5c0 4.500 6 4.500 7 2" stroke="#fff" strokeWidth="2" />
                <path d="M0 13C4 9 10 2 15 1" stroke="#9be37a" />
            </>
        ),
    },
];

function TaskBar() {
    return (
        <footer className="flex h-10 shrink-0 items-center bg-[#020d10] whitespace-nowrap text-white">
            <button aria-label="开始" className="flex h-full w-12 items-center justify-center bg-black">
                <Svg><path d="M0 2.5 7 1.5v6H0zM8 1.300 16 0v7.500H8zM0 8.500h7v6l-7-1zM8 8.500h8V16l-8-1.200z" fill="#fff" /></Svg>
            </button>
            <label className="flex h-full w-[344px] items-center bg-[#333] pr-3 pl-[9px]">
                <span className="size-[21px] shrink-0 rounded-full border-3 border-white" />
                <input aria-label="搜索" placeholder="在这里输入你要搜索的内容" className="ml-1.5 min-w-0 flex-1 text-[14px] outline-none placeholder:text-[#9a9a9a]" />
                <Svg><rect x="5.5" y=".5" width="5" height="9" rx="1.5" stroke="#aaa" /><path d="M3.5 7v5h9V7M8 12v3.5M5 15.5h6" stroke="#aaa" /></Svg>
            </label>
            <div className="flex h-full gap-px pl-0.5">
                <button aria-label="fan" className="flex w-12 items-center justify-center">
                    <Svg size="size-[22px]">
                        <g fill="#e4e8e6">
                            <path d="M7.5 7.5C3 8 0 6 1 2.5 2-.5 7 0 7.5 3z" />
                            <path d="M8.5 7.5C8 3 10 0 13.5 1c3 1 2.500 6-.5 6.500z" />
                            <path d="M8.5 8.5c4.500-.5 7.500 1.500 6.500 5-1 3-6 2.500-6.500-.5z" />
                            <path d="M7.5 8.5c.5 4.500-1.500 7.500-5 6.500-3-1-2.500-6 .5-6.500z" />
                        </g>
                    </Svg>
                </button>
                <button aria-label="swirl" className="flex w-12 items-center justify-center">
                    <Svg size="size-5"><path d={SWIRL} stroke="#d8d8d8" strokeWidth=".9" /></Svg>
                </button>
                <span className="w-1" />
                {APPS.map((app) => (
                    <button
                        key={app.name}
                        aria-label={app.name}
                        className={clsx("flex w-12 flex-col items-center justify-between pt-2", app.active && "bg-[#343d40]")}
                    >
                        <Svg size="size-6">{app.icon}</Svg>
                        <span className={clsx("h-0.5", app.active ? "w-full" : "w-10", app.running && "bg-[#76b9ed]")} />
                    </button>
                ))}
            </div>
            <div className="ml-auto flex h-full items-center">
                <p className="w-14 text-center leading-[17px]">17%<br />CPU使用</p>
                <div className="ml-3 flex items-center gap-[7px]">
                    <ChevronUp className="mr-0.5 size-4" strokeWidth={2} />
                    <Svg><path d="M5.5 4.5h9v7h-9z" stroke="#fff" /><path d="M7 6h6v4H7zM15 6.5h1v3h-1zM1 5h4v3H1z" fill="#fff" /><path d="M2 3v2M4 3v2M3 8v3h3" stroke="#fff" /></Svg>
                    <Svg><path d="M2 14C2 8 8 2 14 2M5 14c0-5 4-9 9-9M8 14c0-3 3-6 6-6" stroke="#aaa" strokeWidth="1.2" /><path d="M11 14c0-2 1-3 3-3v3z" fill="#fff" /></Svg>
                    <Svg><path d="M1 6h2l4-4v12L3 10H1z" stroke="#fff" /><path d="M9 6c1 1 1 3 0 4M11 4c2 2 2 6 0 8M13 2.5c3 3 3 8 0 11" stroke="#ccc" /></Svg>
                    <svg viewBox="0 0 23 14" className="ml-1 h-3.5 w-[23px]" fill="none" stroke="#fff">
                        <path d="M.5.5h22v13H.5z" />
                        <path d="M3 4h17M3 7h17" strokeDasharray="1 1" />
                        <path d="M6 10.5h11" />
                    </svg>
                    <span className="ml-0.5 text-[13px]">英</span>
                    <SogouIcon size="ml-1.5 size-[18px]" />
                </div>
                <p className="ml-4 w-[60px] text-center leading-[19px]">16:37<br />2017/9/8</p>
                <button aria-label="通知" className="relative ml-[18px] size-[30px]">
                    <Svg size="mt-px size-[18px]"><path d="M1 1h14v11H9l-4 3v-3H1z" fill="#fff" /><path d="M3 4h10M3 6.5h10M3 9h7" stroke="#020d10" /></Svg>
                    <span className="absolute right-0 bottom-0 flex h-4 w-[21px] items-center justify-center rounded-full border border-[#999] bg-[#222] text-[11px] font-bold">20</span>
                </button>
                <span className="mr-[3px] ml-2 h-full w-px bg-[#555]" />
            </div>
        </footer>
    );
}

export default function App() {
    return (
        <div className="relative flex h-screen flex-col overflow-hidden bg-[#f0f0f0] font-['Noto_Sans','Noto_Sans_CJK_SC',sans-serif] text-[12px] leading-4 text-black">
            <TitleBar />
            <MenuBar />
            <ToolBar />
            <div className="mb-0.5 flex min-h-0 flex-1">
                <NavDock />
                <ComponentPanel />
                <DrawingArea />
            </div>
            <StatusBar />
            <TaskBar />

            <PolygonEditor />
            <GridDialog />

            <div className="absolute -top-7 left-[944px] flex size-[47px] items-end justify-center rounded-full border-2 border-[#b9c9bb] bg-[#3cc75a] pb-0.5 text-[11px] font-bold text-white shadow-md outline-1 -outline-offset-3 outline-[#15803d]">
                78
            </div>

            {/* red marker rings around the grid command and the dialog title */}
            <svg viewBox="0 0 440 290" className="pointer-events-none absolute top-0 left-0 h-[290px] w-[440px]" fill="none" stroke="#ff0000" strokeWidth="3">
                <ellipse cx="354" cy="94" rx="69" ry="25" />
                <ellipse cx="161" cy="237" rx="75" ry="37" />
            </svg>
        </div>
    );
}
